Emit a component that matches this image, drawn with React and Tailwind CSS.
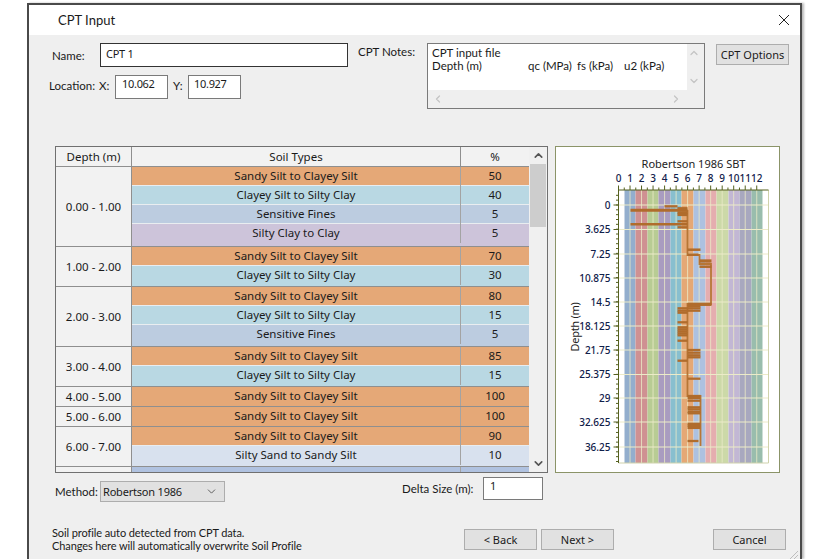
import { ChevronDown, ChevronLeft, ChevronRight, ChevronUp } from "lucide-react";

const ORANGE = "bg-[#e5a877]";
const TEAL = "bg-[#b9d8e3]";
const BLUE = "bg-[#bccce0]";
const LILAC = "bg-[#cdc4da]";
const PALE = "bg-[#d8e1ee]";
const MID = "bg-[#b0c2e0]";

const groups = [
  {
    depth: "0.00 - 1.00",
    height: "h-[80px]",
    rows: [
      ["Sandy Silt to Clayey Silt", "50", ORANGE],
      ["Clayey Silt to Silty Clay", "40", TEAL],
      ["Sensitive Fines", "5", BLUE],
      ["Silty Clay to Clay", "5", LILAC],
    ],
  },
  {
    depth: "1.00 - 2.00",
    height: "h-[40px]",
    rows: [
      ["Sandy Silt to Clayey Silt", "70", ORANGE],
      ["Clayey Silt to Silty Clay", "30", TEAL],
    ],
  },
  {
    depth: "2.00 - 3.00",
    height: "h-[60px]",
    rows: [
      ["Sandy Silt to Clayey Silt", "80", ORANGE],
      ["Clayey Silt to Silty Clay", "15", TEAL],
      ["Sensitive Fines", "5", BLUE],
    ],
  },
  {
    depth: "3.00 - 4.00",
    height: "h-[40px]",
    rows: [
      ["Sandy Silt to Clayey Silt", "85", ORANGE],
      ["Clayey Silt to Silty Clay", "15", TEAL],
    ],
  },
  { depth: "4.00 - 5.00", height: "h-[20px]", rows: [["Sandy Silt to Clayey Silt", "100", ORANGE]] },
  { depth: "5.00 - 6.00", height: "h-[20px]", rows: [["Sandy Silt to Clayey Silt", "100", ORANGE]] },
  {
    depth: "6.00 - 7.00",
    height: "h-[40px]",
    rows: [
      ["Sandy Silt to Clayey Silt", "90", ORANGE],
      ["Silty Sand to Sandy Silt", "10", PALE],
    ],
  },
  { depth: "", height: "h-[20px]", rows: [["Silty Sand to Sandy Silt", "55", MID]] },
];

const bands = [
  [624, 635, "#93aecd"],
  [635, 647, "#cf9192"],
  [647, 658, "#b8cc94"],
  [658, 670, "#a99cc0"],
  [670, 681, "#88bfcf"],
  [681, 693, "#e5a875"],
  [693, 705, "#adc1e0"],
  [705, 716, "#e5adaf"],
  [716, 728, "#ccd9a8"],
  [728, 739, "#c2b7d4"],
  [739, 751, "#a8a8bf"],
  [751, 762, "#99bdad"],
];

const depthLabels = [
  ["0", 205],
  ["3.625", 229.5],
  ["7.25", 254],
  ["10.875", 278],
  ["14.5", 302],
  ["18.125", 326],
  ["21.75", 350],
  ["25.375", 374.5],
  ["29", 398],
  ["32.625", 422],
  ["36.25", 447],
];

// x1, x2, y, stroke width
const logBars = [
  [664, 677, 206.3, 2.3],
  [677, 687, 208.5, 2.8],
  [630, 687, 210.3, 2.9],
  [677, 687, 212.7, 2.8],
  [677, 687, 214.7, 2.8],
  [677, 687, 221.3, 2.3],
  [630, 687, 224.3, 2.5],
  [677, 687, 227.3, 2.3],
  [687, 700, 249.7, 2.5],
  [687, 698, 254.7, 2.5],
  [699, 711, 261, 3.3],
  [699, 711, 266.7, 2.5],
  [687, 711, 304.3, 3.3],
  [687, 700, 306.3, 2.3],
  [677, 700, 308.3, 2.3],
  [677, 700, 310.7, 2.3],
  [677, 687, 312.7, 2.3],
  [677, 687, 322.3, 2.3],
  [677, 687, 327.3, 2.3],
  [677, 687, 329.3, 2.3],
  [677, 687, 331.3, 2.3],
  [677, 687, 333.3, 2.3],
  [677, 687, 335.3, 2.3],
  [677, 687, 340.7, 2.3],
  [687, 700, 350, 2.3],
  [687, 700, 352.7, 2.3],
  [687, 700, 355.3, 2.3],
  [687, 700, 357.3, 2.3],
  [677, 687, 360.7, 2.3],
  [687, 700, 378.7, 2.3],
  [687, 700, 396, 2.3],
  [687, 700, 398, 2.3],
  [687, 700, 400.7, 2.3],
  [687, 700, 407.3, 2.3],
  [687, 700, 409.3, 2.3],
  [687, 700, 411.7, 2.3],
  [687, 700, 413.3, 2.3],
  [687, 700, 424, 2.7],
  [687, 700, 425.7, 2.7],
  [687, 700, 427.7, 2.7],
  [687, 698, 441, 2.3],
];

function SbtChart() {
  const xTicks = Array.from({ length: 25 }, (_, i) => 618 + i * 5.76);
  const yMinor = Array.from({ length: 56 }, (_, i) => 195.3 + i * 4.84);
  return (
    <svg viewBox="556 147 222 325" className="h-full w-full">
      {bands.map(([a, b, c]) => (
        <rect key={a} x={a} y={190} width={b - a} height={273} fill={c} />
      ))}
      {Array.from({ length: 13 }, (_, i) => (
        <line key={i} x1={618 + i * 11.52} x2={618 + i * 11.52} y1={190} y2={463} stroke="#ecebc8" strokeWidth="1" opacity="0.8" />
      ))}
      {depthLabels.map(([t, y]) => (
        <line key={t} x1={618} x2={768} y1={y} y2={y} stroke="#ecebc8" strokeWidth="1" />
      ))}
      <path d="M768 190V463H618" fill="none" stroke="#cfd2ab" strokeWidth="1" />

      <path
        d="M687 210V250L687 255H699V264H710.5V304H687V396H700V446"
        fill="none"
        stroke="#b77636"
        strokeWidth="1.8"
      />
      {logBars.map(([a, b, y, w], i) => (
        <line key={i} x1={a} x2={b} y1={y} y2={y} stroke="#b06c2c" strokeWidth={w} />
      ))}

      <path d="M618 190H768M618 190V463" fill="none" stroke="#55611f" strokeWidth="1" />
      {xTicks.map((x, i) => (
        <line key={i} x1={x} x2={x} y1={190} y2={i % 2 ? 187.5 : 185.5} stroke="#55611f" strokeWidth="1" />
      ))}
      {yMinor.map((y) => (
        <line key={y} x1={615.5} x2={618} y1={y} y2={y} stroke="#55611f" strokeWidth="1" />
      ))}
      {depthLabels.map(([t, y]) => (
        <line key={t} x1={613} x2={618} y1={y} y2={y} stroke="#55611f" strokeWidth="1" />
      ))}

      <g fontSize="10" fontWeight="500" fill="#10204a" fontFamily="'Noto Sans', sans-serif">
        {Array.from({ length: 13 }, (_, i) => (
          <text key={i} x={618 + i * 11.52} y={182} textAnchor="middle">
            {i}
          </text>
        ))}
        {depthLabels.map(([t, y]) => (
          <text key={t} x={610} y={y + 3.5} textAnchor="end">
            {t}
          </text>
        ))}
      </g>
      <text x={693} y={168} textAnchor="middle" fontSize="11" fill="#222" fontFamily="'Noto Sans', sans-serif">
        Robertson 1986 SBT
      </text>
      <text
        x={578}
        y={327}
        textAnchor="middle"
        fontSize="11"
        letterSpacing="-0.3"
        fill="#222"
        fontFamily="'Noto Sans', sans-serif"
        transform="rotate(-90 578 327)"
      >
        Depth (m)
      </text>
    </svg>
  );
}

function GroupRow({ group }) {
  return (
    <div className={`${group.height} flex shrink-0 border-b border-[#8f8f8f]`}>
      <div className="flex w-[76px] shrink-0 items-center justify-center border-r border-[#8f8f8f] bg-[#f2f2f2]">
        {group.depth}
      </div>
      <div className="flex flex-1 flex-col">
        {group.rows.map(([soil, pct, color], i) => (
          <div
            key={i}
            className={`${i === group.rows.length - 1 ? "flex-1" : "h-[19px] shrink-0 border-b border-[#e9edf0]"} ${color} flex`}
          >
            <div className="flex h-[19px] w-[329px] shrink-0 items-center justify-center border-r border-[#a3a3a3] pb-[2px]">
              {soil}
            </div>
            <div className="flex h-[19px] flex-1 items-center justify-center pb-[2px]">{pct}</div>
          </div>
        ))}
      </div>
    </div>
  );
}

function Button({ children, className }) {
  return (
    <div
      className={`flex h-[21px] w-[73px] items-center justify-center border border-[#adadad] bg-[#e1e1e1] font-['Noto_Sans',sans-serif] text-[11px] ${className || ""}`}
    >
      {children}
    </div>
  );
}

function TextBox({ children, className }) {
  return (
    <div className={`bg-white font-['Noto_Sans',sans-serif] text-[11px] tracking-[-0.3px] ${className}`}>
      {children}
    </div>
  );
}

export default function App() {
  return (
    <div className="h-[559px] w-[828px] overflow-hidden whitespace-nowrap bg-white font-['Lato',sans-serif] text-[11.5px] leading-[13px] text-[#1a1a1a]">
      <div className="relative ml-[27px] mt-[3px] flex h-[556px] w-[775px] flex-col border-x-2 border-t-2 border-x-[#4a4a4a] border-t-[#4a4a4a] bg-[#efefef] shadow-[2px_0_2px_#bbb]">
        {/* title bar */}
        <div className="flex h-[30px] shrink-0 items-center justify-between bg-white pl-[29px] pr-[10px] text-[13px]">
          <span>CPT Input</span>
          <svg width="12" height="12" viewBox="0 0 12 12" className="mb-[1px]">
            <path d="M1 1L11 11M11 1L1 11" stroke="#222" strokeWidth="1" />
          </svg>
        </div>

        {/* name, location, notes */}
        <div className="flex h-[111px] shrink-0 pt-[8px]">
          <div className="ml-[20px] flex w-[309px] shrink-0 flex-col gap-[8px]">
            <div className="flex items-center">
              <span className="ml-[3px] w-[48px]">Name:</span>
              <TextBox className="h-[24px] w-[248px] border border-[#333] px-[5px] pt-[3px]">CPT 1</TextBox>
            </div>
            <div className="flex items-center">
              <span className="mb-[3px] w-[50px]">Location:</span>
              <span className="mb-[3px] w-[16px]">X:</span>
              <TextBox className="h-[24px] w-[53px] border border-[#7a7a7a] px-[6px] pt-[1px]">10.062</TextBox>
              <span className="mb-[3px] ml-[5px] w-[15px]">Y:</span>
              <TextBox className="h-[24px] w-[53px] border border-[#7a7a7a] px-[5px] pt-[1px]">10.927</TextBox>
            </div>
          </div>
          <span className="mt-[2px] w-[69px] shrink-0">CPT Notes:</span>
          <div className="relative h-[66px] w-[278px] shrink-0 border border-[#7a7a7a] bg-[#efefef]">
            <div className="mr-[17px] h-[46px] bg-white pl-[4px] pt-[2px]">
              <div>CPT input file</div>
              <div className="flex">
                <span className="w-[96px]">Depth (m)</span>
                <span className="w-[49px]">qc (MPa)</span>
                <span className="w-[47px]">fs (kPa)</span>
                <span>u2 (kPa)</span>
              </div>
            </div>
            <ChevronUp size={12} strokeWidth={2.5} className="absolute right-[4px] top-[3px] text-[#c4c4c4]" />
            <ChevronDown size={12} strokeWidth={2.5} className="absolute right-[4px] top-[31px] text-[#c4c4c4]" />
            <div className="flex justify-between pl-[4px] pr-[22px] pt-[3px] text-[#c4c4c4]">
              <ChevronLeft size={12} strokeWidth={2.5} />
              <ChevronRight size={12} strokeWidth={2.5} />
            </div>
          </div>
          <Button className="ml-[11px] mt-[1px]">CPT Options</Button>
        </div>

        {/* soil table and chart */}
        <div className="ml-[26px] flex h-[327px] shrink-0 gap-[7px]">
          <div className="flex h-full w-[493px] shrink-0 overflow-hidden border border-[#707070] bg-[#f0f0f0] font-['Noto_Sans',sans-serif]">
            <div className="flex w-[473px] shrink-0 flex-col overflow-hidden">
              <div className="flex h-[20px] shrink-0 border-b border-[#8f8f8f] bg-[#f2f2f2]">
                <div className="flex w-[76px] shrink-0 items-center justify-center border-r border-[#8f8f8f]">Depth (m)</div>
                <div className="flex w-[329px] shrink-0 items-center justify-center border-r border-[#8f8f8f]">Soil Types</div>
                <div className="flex flex-1 items-center justify-center">%</div>
              </div>
              {groups.map((g) => (
                <GroupRow key={g.depth} group={g} />
              ))}
            </div>
            <div className="flex flex-1 flex-col items-center justify-between">
              <div className="flex w-full flex-col items-center">
                <ChevronUp size={13} strokeWidth={3} className="my-[2px] text-[#555]" />
                <div className="h-[63px] w-[16px] bg-[#cdcdcd]" />
              </div>
              <ChevronDown size={13} strokeWidth={3} className="mb-[2px] text-[#555]" />
            </div>
          </div>
          <div className="h-full w-[225px] shrink-0 border border-[#8b9468] bg-white">
            <SbtChart />
          </div>
        </div>

        {/* method, delta size */}
        <div className="ml-[26px] flex h-[32px] shrink-0 items-start pt-[4px]">
          <span className="mt-[8px] w-[45px]">Method:</span>
          <div className="mt-[4px] flex h-[21px] w-[125px] items-center justify-between border border-[#adadad] bg-[#e1e1e1] pl-[2px] pr-[6px] font-['Noto_Sans',sans-serif] text-[11px] tracking-[-0.2px]">
            <span>Robertson 1986</span>
            <ChevronDown size={13} strokeWidth={1.5} className="text-[#444]" />
          </div>
          <span className="ml-[177px] mt-[5px] w-[81px]">Delta Size (m):</span>
          <TextBox className="h-[23px] w-[60px] border border-[#7a7a7a] px-[6px] pt-[1px]">1</TextBox>
        </div>

        {/* footer */}
        <div className="flex h-[47px] shrink-0 items-end pb-[2px]">
          <div className="-mb-[2px] ml-[23px] w-[412px] shrink-0 text-[11px] tracking-[-0.1px]">
            <div>Soil profile auto detected from CPT data.</div>
            <div>Changes here will automatically overwrite Soil Profile</div>
          </div>
          <Button>&lt; Back</Button>
          <Button className="ml-[4px]">Next &gt;</Button>
          <Button className="ml-[99px]">Cancel</Button>
        </div>

        {/* resize grip */}
        <svg width="10" height="8" viewBox="0 0 10 8" className="absolute bottom-0 right-[2px]">
          <path d="M2 8L10 0M6 8L10 4" stroke="#bdbdbd" strokeWidth="1" />
        </svg>
      </div>
    </div>
  );
}
